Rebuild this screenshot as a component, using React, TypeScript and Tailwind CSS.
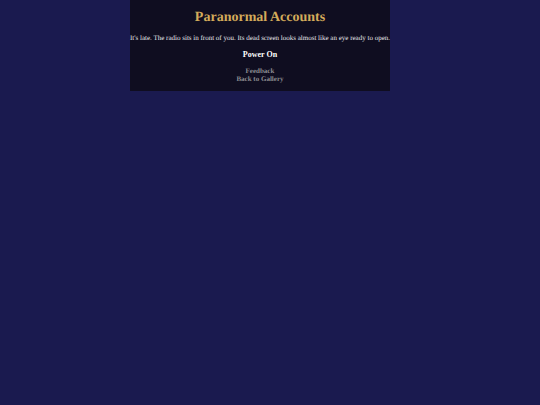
export default function App() {
  return (
    <div className="flex min-h-screen items-start justify-center bg-[#1a1a4f] pr-5 font-['Liberation_Serif',serif] [text-rendering:geometricPrecision]">
      <main className="flex flex-col items-center bg-[#0f0d20] pt-2.5 pb-2 text-center">
        <h1 className="text-[14px] leading-4 font-bold text-[#d3ab5b]">Paranormal Accounts</h1>
        <p className="mt-1.5 text-[7px] leading-3 whitespace-nowrap text-[#e6e6ea]">
          It's late. The radio sits in front of you. Its dead screen looks almost like an eye ready to open.
        </p>
        <button type="button" className="mt-1 text-[8px] leading-3.5 font-bold text-white">
          Power On
        </button>
        <nav className="mt-[5px] flex flex-col items-center text-[7px] leading-2 font-bold text-[#8c8c90]">
          <a href="#feedback">Feedback</a>
          <a href="#gallery">Back to Gallery</a>
        </nav>
      </main>
    </div>
  );
}
